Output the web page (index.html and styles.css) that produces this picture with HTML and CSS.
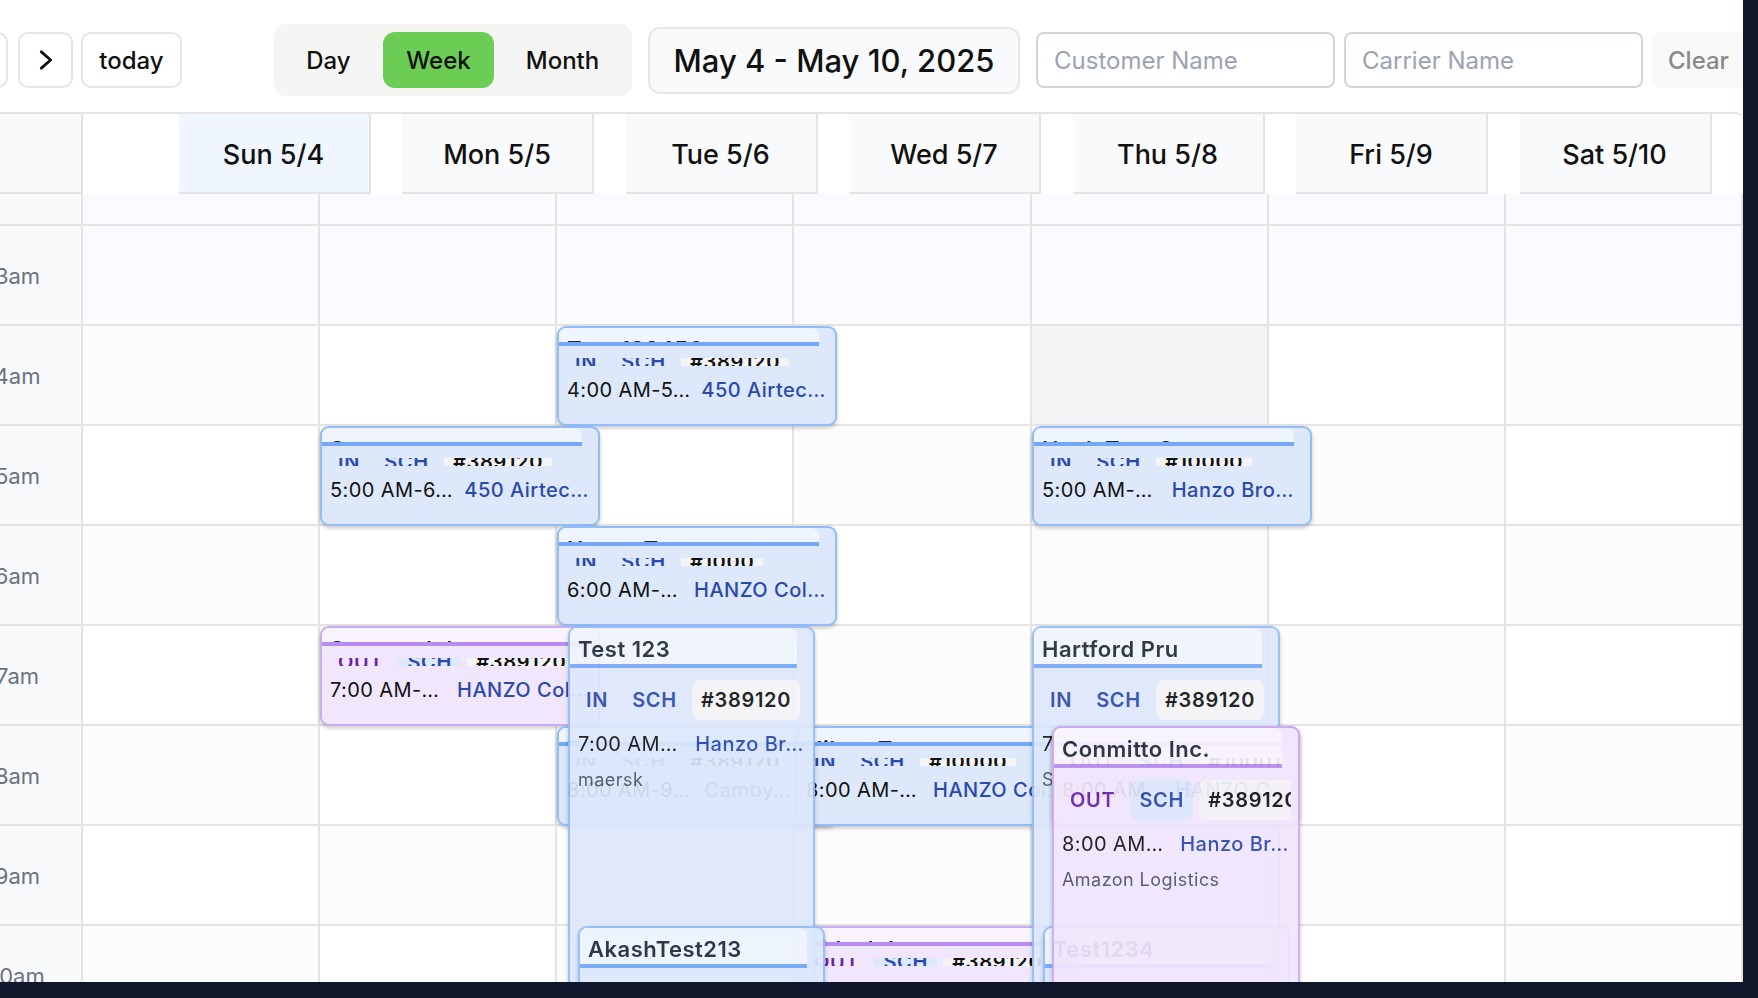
FILE: index.html
```html
<!DOCTYPE html>
<html lang="en">
<head>
<meta charset="utf-8">
<title>Schedule</title>
<link rel="stylesheet" href="styles.css">
</head>
<body>
<div class="page">
  <div class="toolbar">
    <button class="btn btn-nav"><svg viewBox="0 0 24 24" class="chev"><path d="M16 5l-8 7 8 7"/></svg></button>
    <button class="btn btn-nav"><svg viewBox="0 0 24 24" class="chev"><path d="M8 5l8 7-8 7"/></svg></button>
    <button class="btn btn-today">today</button>
    <div class="views">
      <span class="view">Day</span>
      <span class="view view-on">Week</span>
      <span class="view">Month</span>
    </div>
    <div class="range">May 4 - May 10, 2025</div>
    <div class="field">Customer Name</div>
    <div class="field">Carrier Name</div>
    <div class="clear">Clear</div>
  </div>

  <div class="calendar">
    <div class="head">
      <div class="head-axis"></div>
      <div class="head-days">
        <div class="day day-now">Sun 5/4</div>
        <div class="day">Mon 5/5</div>
        <div class="day">Tue 5/6</div>
        <div class="day">Wed 5/7</div>
        <div class="day">Thu 5/8</div>
        <div class="day">Fri 5/9</div>
        <div class="day">Sat 5/10</div>
      </div>
    </div>

    <div class="grid">
      <div class="row row-allday"><div class="axis"></div><div class="cell"></div><div class="cell"></div><div class="cell"></div><div class="cell"></div><div class="cell"></div><div class="cell"></div><div class="cell"></div></div>
      <div class="row row-tint"><div class="axis"><span>3am</span></div><div class="cell"></div><div class="cell"></div><div class="cell"></div><div class="cell"></div><div class="cell"></div><div class="cell"></div><div class="cell"></div></div>
      <div class="row row-a"><div class="axis"><span>4am</span></div><div class="cell"></div><div class="cell"></div><div class="cell"></div><div class="cell"></div><div class="cell cell-hover"></div><div class="cell"></div><div class="cell"></div></div>
      <div class="row row-b"><div class="axis"><span>5am</span></div><div class="cell"></div><div class="cell"></div><div class="cell"></div><div class="cell"></div><div class="cell"></div><div class="cell"></div><div class="cell"></div></div>
      <div class="row row-a"><div class="axis"><span>6am</span></div><div class="cell"></div><div class="cell"></div><div class="cell"></div><div class="cell"></div><div class="cell"></div><div class="cell"></div><div class="cell"></div></div>
      <div class="row row-b"><div class="axis"><span>7am</span></div><div class="cell"></div><div class="cell"></div><div class="cell"></div><div class="cell"></div><div class="cell"></div><div class="cell"></div><div class="cell"></div></div>
      <div class="row row-a"><div class="axis"><span>8am</span></div><div class="cell"></div><div class="cell"></div><div class="cell"></div><div class="cell"></div><div class="cell"></div><div class="cell"></div><div class="cell"></div></div>
      <div class="row row-b"><div class="axis"><span>9am</span></div><div class="cell"></div><div class="cell"></div><div class="cell"></div><div class="cell"></div><div class="cell"></div><div class="cell"></div><div class="cell"></div></div>
      <div class="row row-a"><div class="axis"><span>10am</span></div><div class="cell"></div><div class="cell"></div><div class="cell"></div><div class="cell"></div><div class="cell"></div><div class="cell"></div><div class="cell"></div></div>

      <article class="event blue short ev-tue4">
        <div class="band">Test 123456</div>
        <div class="chips"><span class="chip in">IN</span><span class="chip sch">SCH</span><span class="chip num">#389120</span></div>
        <div class="when"><span>4:00 AM-5…</span><span class="loc">450 Airtec…</span></div>
      </article>
      <article class="event blue short ev-mon5">
        <div class="band">Sonoma</div>
        <div class="chips"><span class="chip in">IN</span><span class="chip sch">SCH</span><span class="chip num">#389120</span></div>
        <div class="when"><span>5:00 AM-6…</span><span class="loc">450 Airtec…</span></div>
      </article>
      <article class="event blue short ev-tue6">
        <div class="band">Hanzo Test</div>
        <div class="chips"><span class="chip in">IN</span><span class="chip sch">SCH</span><span class="chip num">#1000</span></div>
        <div class="when"><span>6:00 AM-…</span><span class="loc">HANZO Col…</span></div>
      </article>
      <article class="event blue short ev-thu5">
        <div class="band">Hank Test 3</div>
        <div class="chips"><span class="chip in">IN</span><span class="chip sch">SCH</span><span class="chip num">#10000</span></div>
        <div class="when"><span>5:00 AM-…</span><span class="loc">Hanzo Bro…</span></div>
      </article>
      <article class="event purple short ev-mon7">
        <div class="band">Sonoma Inlet</div>
        <div class="chips"><span class="chip out">OUT</span><span class="chip sch">SCH</span><span class="chip num">#389120</span></div>
        <div class="when"><span>7:00 AM-…</span><span class="loc">HANZO Col…</span></div>
      </article>
      <article class="event blue short ev-tue8">
        <div class="band">Test</div>
        <div class="chips"><span class="chip in">IN</span><span class="chip sch">SCH</span><span class="chip num">#389120</span></div>
        <div class="when"><span>8:00 AM-9…</span><span class="loc">Camby…</span></div>
      </article>
      <article class="event blue short ev-wed8">
        <div class="band">Hilton Test</div>
        <div class="chips"><span class="chip in">IN</span><span class="chip sch">SCH</span><span class="chip num">#10000</span></div>
        <div class="when"><span>8:00 AM-…</span><span class="loc">HANZO Col…</span></div>
      </article>
      <article class="event purple short ev-wed10">
        <div class="band">Sitka Inlet</div>
        <div class="chips"><span class="chip out">OUT</span><span class="chip sch">SCH</span><span class="chip num">#389120</span></div>
        <div class="when"><span>10:00 AM-…</span><span class="loc">HANZO Col…</span></div>
      </article>
      <article class="event blue glass ev-test123">
        <div class="band">Test 123</div>
        <div class="chips"><span class="chip in">IN</span><span class="chip sch">SCH</span><span class="chip num">#389120</span></div>
        <div class="when"><span>7:00 AM…</span><span class="loc">Hanzo Br…</span></div>
        <div class="carrier">maersk</div>
      </article>
      <article class="event blue glass ev-akash">
        <div class="band">AkashTest213</div>
      </article>
      <article class="event blue glass ev-hartford">
        <div class="band">Hartford Pru</div>
        <div class="chips"><span class="chip in">IN</span><span class="chip sch">SCH</span><span class="chip num">#389120</span></div>
        <div class="when"><span>7:00 AM…</span><span class="loc">Hanzo Br…</span></div>
        <div class="carrier">SAIA</div>
      </article>
      <article class="event blue glass ev-test1234">
        <div class="band">Test1234</div>
      </article>
      <article class="event purple short ev-thu8">
        <div class="band">Conmitto</div>
        <div class="chips"><span class="chip out">OUT</span><span class="chip sch">SCH</span><span class="chip num">#10001</span></div>
        <div class="when"><span>8:00 AM</span><span class="loc">HANZO C…</span></div>
      </article>
      <article class="event purple glass ev-conmitto">
        <div class="band">Conmitto Inc.</div>
        <div class="chips"><span class="chip out">OUT</span><span class="chip sch">SCH</span><span class="chip num">#389120</span></div>
        <div class="when"><span>8:00 AM…</span><span class="loc">Hanzo Br…</span></div>
        <div class="carrier">Amazon Logistics</div>
      </article>
    </div>
  </div>
</div>
</body>
</html>
```

FILE: styles.css
```css
* { box-sizing: border-box; }
html, body { margin: 0; height: 100%; }
body { background: #0f172a; overflow: hidden; font-family: Inter, "Liberation Sans", sans-serif; color: #111; }

.page { width: 1743px; height: 982px; background: #fff; overflow: hidden; }

/* toolbar */
.toolbar { height: 112px; padding-top: 8px; display: flex; align-items: center; margin-left: -47px; white-space: nowrap; }
.btn { flex: none; height: 56px; background: #fff; border: 2px solid #e5e5e5; border-radius: 10px; font: 450 24px Inter, sans-serif; color: #111; padding: 0; display: flex; align-items: center; justify-content: center; }
.btn-nav { width: 55px; margin-right: 10px; }
.btn-today { width: 101px; margin-left: -2px; }
.chev { width: 28px; height: 28px; fill: none; stroke: #111; stroke-width: 2.4; stroke-linecap: round; stroke-linejoin: round; }
.views { flex: none; width: 358px; height: 72px; margin-left: 92px; padding: 8px; display: flex; background: #f5f5f4; border-radius: 12px; }
.view { flex: none; height: 56px; display: flex; align-items: center; justify-content: center; font-size: 24px; font-weight: 450; border-radius: 12px; width: 93px; margin-right: 8px; }
.view:nth-child(3) { width: 129px; margin: 0; padding-left: 8px; }
.view-on { background: #6bcd53; width: 111px; margin-right: 0; }
.range { flex: none; width: 372px; height: 67px; margin-left: 16px; display: flex; align-items: center; justify-content: center; background: #f9fafb; border: 2px solid #e5e7eb; border-radius: 12px; font-size: 31px; font-weight: 450; }
.field { flex: none; width: 299px; height: 56px; margin-left: 9px; padding-left: 16px; display: flex; align-items: center; background: #fff; border: 2px solid #d1d5db; border-radius: 8px; font-size: 24px; color: #9ca3af; }
.range + .field { margin-left: 16px; }
.clear { flex: none; width: 91px; height: 56px; margin-left: 9px; padding-left: 16px; display: flex; align-items: center; background: #f9f9f8; border-radius: 10px 0 0 10px; font-size: 24px; font-weight: 500; color: #8a8a8a; }

/* header */
.calendar { border-top: 2px solid #e5e4e4; border-top-right-radius: 8px; }
.head { height: 80px; display: flex; }
.head-axis { width: 83px; background: #f9fafb; border-right: 2px solid #e5e4e4; border-bottom: 2px solid #e5e4e4; }
.head-days { flex: 1; padding-left: 96px; display: grid; grid-template-columns: repeat(7, 223.5px); }
.day { width: 192px; display: flex; align-items: center; justify-content: center; background: #f9fafb; border-right: 2px solid #e5e4e4; border-bottom: 2px solid #e5e4e4; font-size: 27px; font-weight: 450; padding-top: 2px; }
.day-now { background: #eff6ff; }

/* grid */
.grid { position: relative; }
.row { height: 100px; display: grid; grid-template-columns: 83px repeat(7, 1fr); }
.row-allday { height: 32px; }
.axis { background: #f9fafb; border-right: 2px solid #e5e4e4; border-bottom: 2px solid #e5e4e4; display: flex; align-items: center; justify-content: center; margin-left: -46px; font-size: 22px; color: #6b7280; padding-top: 1px; }
.cell { border-right: 2px solid #e5e4e4; border-bottom: 2px solid #e5e4e4; background: #fff; }
.row-allday .cell, .row-tint .cell { background: #fafbfe; }
.row-a .cell:nth-child(odd), .row-b .cell:nth-child(even) { background: #fff; }
.row-a .cell:nth-child(even), .row-b .cell:nth-child(odd) { background: #fcfcfc; }
.row-a .cell.cell-hover { background: #f3f4f6; }

/* events */
.event { position: absolute; display: flex; flex-direction: column; gap: 12px; height: 100px; border: 2px solid; border-radius: 9px; overflow: hidden; box-shadow: 0 2px 4px rgba(0, 0, 0, .22); }
.glass { opacity: .92; height: 400px; }
.blue { background: #dde8fb; border-color: #93bdf8; }
.blue .band { background: #eff5fe; border-bottom-color: #74a7f6; }
.purple { background: #f1e7fc; border-color: #c9adf3; }
.purple .band { background: #f8f4fe; border-bottom-color: #b88cf0; }

.band { flex: none; height: 40px; margin-right: 16px; padding: 7px 8px 0; border-bottom: 4px solid; border-top-right-radius: 8px; font-size: 22px; line-height: 28px; font-weight: 600; letter-spacing: .5px; color: #1f2937; white-space: nowrap; overflow: hidden; }
.short .band { height: 18px; }

.chips { flex: none; height: 40px; margin: 0 7px; display: flex; align-items: center; gap: 6px; overflow: hidden; }
.short .chips { height: 8px; }
.chip { flex: none; height: 40px; padding: 0 9px; display: flex; align-items: center; border-radius: 8px; font-size: 20px; font-weight: 600; letter-spacing: .7px; white-space: nowrap; }
.in { background: #dde8fb; color: #2b48ad; }
.sch { background: #dde8fb; color: #2b48ad; }
.out { background: #f1e7fc; color: #6b21a8; }
.num { background: #f3f4f6; color: #111; }

.when { flex: none; height: 24px; padding: 0 9px 0 8px; display: flex; justify-content: space-between; font-size: 20px; line-height: 24px; letter-spacing: .4px; white-space: nowrap; color: #111; overflow: hidden; }
.loc { color: #2b48ad; font-weight: 500; letter-spacing: .5px; }
.carrier { flex: none; padding: 0 8px; font-size: 18px; line-height: 24px; letter-spacing: .45px; color: #4b5563; white-space: nowrap; }

.ev-tue4 { left: 557px; top: 132px; width: 280px; }
.ev-mon5 { left: 320px; top: 232px; width: 280px; }
.ev-tue6 { left: 557px; top: 332px; width: 280px; }
.ev-thu5 { left: 1032px; top: 232px; width: 280px; }
.ev-thu5 .when { padding-right: 16px; }
.ev-mon7 { left: 320px; top: 432px; width: 280px; }
.ev-tue8 { left: 557px; top: 532px; width: 280px; }
.ev-tue8 .when { justify-content: flex-start; gap: 14px; }
.ev-wed8 { left: 796px; top: 532px; width: 280px; }
.ev-wed10 { left: 796px; top: 732px; width: 280px; }
.ev-test123 { left: 568px; top: 432px; width: 247px; }
.ev-akash { left: 578px; top: 732px; width: 247px; }
.ev-hartford { left: 1032px; top: 432px; width: 248px; }
.ev-test1234 { left: 1043px; top: 732px; width: 247px; }
.ev-thu8 { left: 1052px; top: 532px; width: 248px; }
.ev-conmitto { left: 1052px; top: 532px; width: 248px; }
```
